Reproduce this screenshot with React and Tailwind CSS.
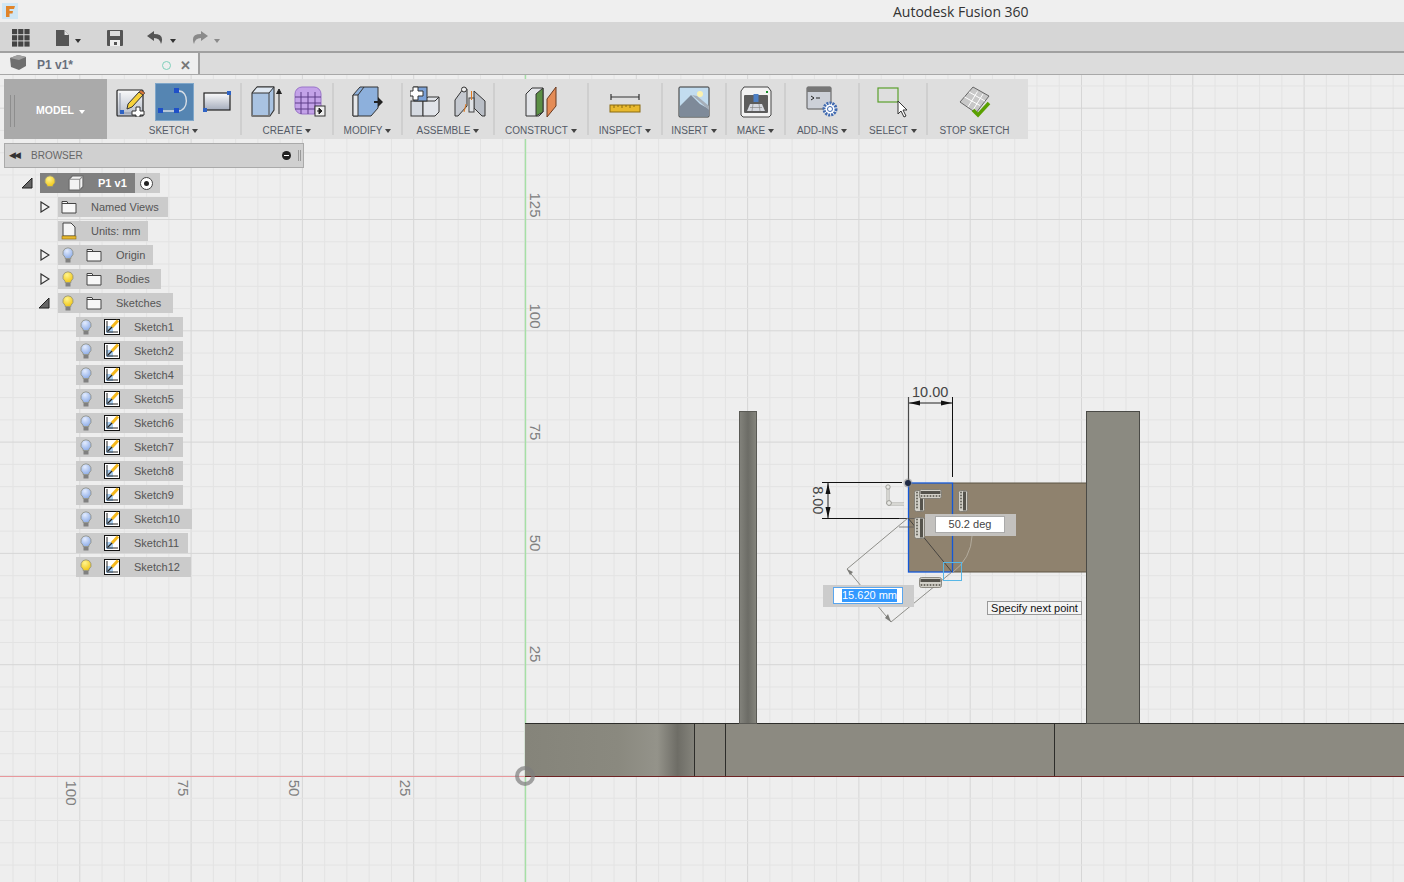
const minorX = Array.from({ length: 64 }, (_, i) => i);
const OX = 525;
const OY = 776;
const STEP = 22.26;

const Caret = ({ className = 'border-t-[#444]' }) => (
  <span className={`inline-block w-0 h-0 border-x-[3px] border-x-transparent border-t-[4px] ${className}`} />
);

const IconSketchNew = () => (
  <svg width="30" height="30" viewBox="0 0 30 30">
    <defs>
      <linearGradient id="pg" x1="0" y1="0" x2="0" y2="1"><stop offset="0" stopColor="#fafafa" /><stop offset="1" stopColor="#b3bac8" /></linearGradient>
    </defs>
    <rect x="1" y="3" width="26" height="26" rx="1" fill="url(#pg)" stroke="#222" strokeWidth="1.2" />
    <path d="M4 6 V26 H24" fill="none" stroke="#8b93a3" strokeWidth="1" />
    <rect x="4" y="23" width="4" height="4" fill="#2f63c4" />
    <path d="M12 17 L23 5 L27 8 L16 20 L11 22 Z" fill="#f7d23c" stroke="#333" strokeWidth="1" />
    <path d="M23 5 L25 3 L29 6 L27 8 Z" fill="#d9783a" stroke="#333" strokeWidth="0.6" />
    <path d="M20 20h4v4h4v4h-4v2h-4v-2h-4v-4h4z" fill="#fff" stroke="#333" strokeWidth="1" />
  </svg>
);

const IconSlot = () => (
  <svg width="36" height="34" viewBox="0 0 36 34">
    <path d="M6 26 H21 C32 26 32 6 22 6" fill="none" stroke="#d7dde4" strokeWidth="1.4" />
    <rect x="1" y="23" width="5" height="5" fill="#1f50c8" />
    <rect x="17" y="23" width="5" height="5" fill="#1f50c8" />
    <rect x="17" y="3" width="5" height="5" fill="#1f50c8" />
  </svg>
);

const IconRect = () => (
  <svg width="30" height="26" viewBox="0 0 30 26">
    <defs>
      <linearGradient id="rg" x1="0" y1="0" x2="0" y2="1"><stop offset="0" stopColor="#fbfbfb" /><stop offset="1" stopColor="#a4acbc" /></linearGradient>
    </defs>
    <rect x="2" y="4" width="26" height="17" fill="url(#rg)" stroke="#222" strokeWidth="1.2" />
    <rect x="25" y="2" width="4" height="4" fill="#2f63c4" />
    <rect x="1" y="19" width="4" height="4" fill="#2f63c4" />
  </svg>
);

const IconBox = () => (
  <svg width="32" height="32" viewBox="0 0 32 32">
    <path d="M1 7 L6 1 H23 V24 L19 30 H1 Z" fill="#a9c3e2" stroke="#333" strokeWidth="1.1" />
    <path d="M1 7 H18 L23 1 H6 Z" fill="#dfe8f2" stroke="#333" strokeWidth="1" />
    <path d="M18 7 V30" stroke="#444" strokeWidth="1" />
    <path d="M1 30 H19" stroke="#777" strokeWidth="2" />
    <path d="M28 28 V5 M25.5 8 L28 3 L30.5 8" fill="#222" stroke="#222" strokeWidth="1" />
  </svg>
);

const IconForm = () => (
  <svg width="32" height="32" viewBox="0 0 32 32">
    <rect x="1" y="1" width="26" height="27" rx="7" fill="#c3a2e8" stroke="#9a74c9" strokeWidth="1" />
    <path d="M7 6 V28 M14 6 V28 M21 6 V28 M1 11 H27 M1 17 H27 M1 23 H27" stroke="#5d3d87" strokeWidth="1" />
    <rect x="21" y="20" width="10" height="10" fill="#eee" stroke="#333" />
    <path d="M23 25 H27 M25 22 L28 25 L25 28 Z" fill="#222" stroke="#222" />
  </svg>
);

const IconModify = () => (
  <svg width="32" height="32" viewBox="0 0 32 32">
    <path d="M1 9 L8 1 H26 V22 L19 30 H1 Z" fill="#8db0dc" stroke="#333" strokeWidth="1" />
    <path d="M1 9 H6 V30 H1 Z" fill="#e5e7ea" stroke="#333" strokeWidth="1" />
    <path d="M6 9 L12 1" stroke="#333" />
    <path d="M22 15 H26 V11 L31 16 L26 21 V17 H22 Z" fill="#222" />
  </svg>
);

const IconAssemble = () => (
  <svg width="32" height="32" viewBox="0 0 32 32">
    <rect x="1" y="15" width="12" height="15" fill="#d5dae1" stroke="#333" />
    <path d="M13 15 L18 11 H29 V26 L25 30 H13 Z" fill="#e1e4e9" stroke="#333" />
    <path d="M13 15 H25 L29 11" fill="none" stroke="#333" />
    <rect x="4" y="1" width="13" height="14" fill="#7ca2d8" stroke="#333" />
    <path d="M3 0h5v4h5v5h-5v4h-5v-4h-3v-5h3z" fill="#fff" stroke="#333" transform="translate(0 1)" />
  </svg>
);

const IconJoint = () => (
  <svg width="32" height="32" viewBox="0 0 32 32">
    <path d="M1 14 L9 3 H13 V20 L4 30 H1 Z" fill="#c5c9d0" stroke="#333" />
    <circle cx="10" cy="3.5" r="2.5" fill="#eee" stroke="#333" />
    <path d="M20 5 L31 15 V30 L28 30 L20 22 Z" fill="#b9bec6" stroke="#333" />
    <rect x="15" y="12" width="5" height="14" fill="#dfe2e6" stroke="#444" />
    <path d="M17.5 5 V14 M10 26 L12 18" stroke="#e07a20" strokeWidth="1" />
  </svg>
);

const IconConstruct = () => (
  <svg width="32" height="32" viewBox="0 0 32 32">
    <path d="M1 8 L7 2 H18 V26 L14 30 H1 Z" fill="#e2e4e8" stroke="#333" />
    <path d="M11 8 L18 2 V26 L11 30 Z" fill="#5a8f45" stroke="#333" />
    <path d="M22 13 L31 1 V20 L22 31 Z" fill="#e48c56" stroke="#6a3a20" />
  </svg>
);

const IconRuler = () => (
  <svg width="32" height="32" viewBox="0 0 32 32">
    <path d="M2 8 V14 M2 11 H30 M30 8 V14" stroke="#333" strokeWidth="1.2" fill="none" />
    <rect x="1" y="19" width="30" height="7" fill="#e8b92e" stroke="#8a6a10" />
    <path d="M5 19v3M9 19v2M13 19v3M17 19v2M21 19v3M25 19v2" stroke="#8a6a10" />
  </svg>
);

const IconInsert = () => (
  <svg width="32" height="32" viewBox="0 0 32 32">
    <rect x="1" y="1" width="30" height="30" rx="1" fill="#c2dcef" stroke="#333" />
    <circle cx="22" cy="8" r="3" fill="#fbf2b0" />
    <path d="M2 30 V20 L13 9 L22 18 L31 23 V30 Z" fill="#7e8a99" />
    <path d="M14 9 L31 24 V20 L19 10 Z" fill="#a5aeb8" />
  </svg>
);

const IconMake = () => (
  <svg width="32" height="32" viewBox="0 0 32 32">
    <path d="M4 1 H28 L31 5 V29 L29 31 H3 L1 29 V5 Z" fill="#f2f2f2" stroke="#444" />
    <rect x="4" y="9" width="24" height="18" rx="1" fill="#5c5c5c" />
    <path d="M7 25 L10 18 H22 L25 25 Z" fill="#d6d9e0" />
    <path d="M10 21.5 H22 M13 18 L12 25 M19 18 L20 25" stroke="#888" strokeWidth="0.7" />
    <rect x="13.5" y="8" width="5" height="8" fill="#4d7fc4" />
    <rect x="26" y="5" width="2" height="2" fill="#1a8f2b" />
  </svg>
);

const IconAddins = () => (
  <svg width="32" height="32" viewBox="0 0 32 32">
    <rect x="1" y="1" width="24" height="22" rx="1" fill="#ccd0d8" stroke="#555" />
    <rect x="1" y="1" width="24" height="5" fill="#777" />
    <path d="M5 10 L8 12 L5 14 M10 12 H14" stroke="#222" fill="none" />
    <circle cx="24" cy="23" r="6" fill="#fff" stroke="#3f69b0" strokeWidth="3" strokeDasharray="2 1" />
    <circle cx="24" cy="23" r="2.5" fill="#fff" stroke="#3f69b0" />
  </svg>
);

const IconSelect = () => (
  <svg width="32" height="32" viewBox="0 0 32 32">
    <rect x="1" y="2" width="20" height="14" fill="none" stroke="#5aa02c" strokeWidth="1.2" />
    <path d="M21 15 V28 L24 25 L27 31 L29 30 L26 24 L30 24 Z" fill="#fff" stroke="#333" />
  </svg>
);

const IconStop = () => (
  <svg width="32" height="32" viewBox="0 0 32 32">
    <path d="M1 16 L14 1 L30 10 L17 27 Z" fill="#c8c8c8" stroke="#666" />
    <path d="M5.5 11 L21 19.5 M10 6 L26 15 M9 21 L18.5 5.5 M14 24 L24 8" stroke="#fff" strokeWidth="1" />
    <path d="M14 24 L19 29 L30 17" fill="none" stroke="#5aa000" strokeWidth="3.5" />
  </svg>
);

const Bulb = ({ on }) => (
  <svg width="12" height="16" viewBox="0 0 12 16">
    <defs>
      <radialGradient id="bulbOn" cx="0.4" cy="0.3" r="0.75"><stop offset="0" stopColor="#fff48e" /><stop offset="1" stopColor="#f0c410" /></radialGradient>
      <radialGradient id="bulbOff" cx="0.4" cy="0.3" r="0.75"><stop offset="0" stopColor="#e3ecff" /><stop offset="1" stopColor="#8aaae6" /></radialGradient>
    </defs>
    <path d="M6 0.8 A5.2 5.2 0 0 1 9 10.2 V11.5 H3 V10.2 A5.2 5.2 0 0 1 6 0.8 Z" fill={on ? 'url(#bulbOn)' : 'url(#bulbOff)'} stroke="#8f8f80" strokeWidth="0.8" />
    <rect x="3.5" y="12" width="5" height="3.5" fill="#808080" />
  </svg>
);

const Folder = () => (
  <svg width="16" height="14" viewBox="0 0 16 14">
    <path d="M1 1.5 H6 L7 3.5 H15 V13 H1 Z" fill="#f7f7f7" stroke="#444" />
    <path d="M1 3.5 H7" stroke="#444" />
  </svg>
);

const UnitsDoc = () => (
  <svg width="16" height="18" viewBox="0 0 16 18">
    <path d="M2 1 H10 L14 5 V14 H2 Z" fill="#f5f5f5" stroke="#444" />
    <rect x="1" y="14" width="14" height="3" fill="#e8b92e" stroke="#8a6a10" strokeWidth="0.6" />
  </svg>
);

const SketchIcon = () => (
  <svg width="17" height="16" viewBox="0 0 17 16">
    <rect x="0.5" y="0.5" width="15" height="15" fill="#fff" stroke="#111" />
    <rect x="2" y="7" width="7" height="7" fill="#a8cdf0" />
    <path d="M3 2 V13 H14" fill="none" stroke="#222" strokeWidth="1" />
    <path d="M4 12 L10 6" stroke="#222" strokeWidth="1.2" />
    <path d="M8 8 L14 1.5" stroke="#f5b81c" strokeWidth="3" />
  </svg>
);

const TriOpen = () => (
  <svg width="12" height="12" viewBox="0 0 12 12"><path d="M1 11 H11 V1 Z" fill="#666" stroke="#222" /></svg>
);
const TriClosed = () => (
  <svg width="10" height="12" viewBox="0 0 10 12"><path d="M1 1 L9 6 L1 11 Z" fill="#f3f3f3" stroke="#333" strokeWidth="1.2" /></svg>
);

// constraint glyph: a light comb with a dark bar along one side
const Hatch = ({ x, y, w, h, vertical }) => {
  const len = vertical ? h : w;
  const n = Math.floor((len - 2) / 3);
  return (
    <g>
      <rect x={x + 0.5} y={y + 0.5} width={w - 1} height={h - 1} rx="2" fill="#d2d0c8" stroke="#77756c" strokeWidth="0.8" />
      {vertical ? (
        <rect x={x + w - 5} y={y + 1.5} width="3" height={h - 3} fill="#55534c" />
      ) : (
        <rect x={x + 1.5} y={y + 2} width={w - 3} height="3" fill="#55534c" />
      )}
      {Array.from({ length: n }, (_, i) =>
        vertical ? (
          <circle key={i} cx={x + 3} cy={y + 2.5 + i * 3} r="1" fill="#66645c" />
        ) : (
          <circle key={i} cx={x + 2.5 + i * 3} cy={y + h - 3} r="1" fill="#66645c" />
        )
      )}
    </g>
  );
};

const Viewport = () => (
  <svg className="absolute inset-0 w-full h-full" viewBox="0 75 1404 807">
    <defs>
      <linearGradient id="base" x1="0" y1="0" x2="1" y2="0">
        <stop offset="0" stopColor="#85847a" />
        <stop offset="0.55" stopColor="#8a897f" />
        <stop offset="0.78" stopColor="#94938a" />
        <stop offset="0.9" stopColor="#6e6d66" />
        <stop offset="1" stopColor="#85847c" />
      </linearGradient>
      <linearGradient id="post" x1="0" y1="0" x2="1" y2="0">
        <stop offset="0" stopColor="#83837c" />
        <stop offset="0.5" stopColor="#6c6c66" />
        <stop offset="1" stopColor="#85857d" />
      </linearGradient>
    </defs>

    {minorX.map((i) => {
      const x = OX + (i - 24) * STEP;
      return <line key={`x${i}`} x1={x} x2={x} y1="75" y2="882" stroke={i % 5 === 4 ? '#d6d6d6' : '#e3e3e3'} strokeWidth="1" />;
    })}
    {minorX.slice(0, 40).map((i) => {
      const y = OY + (i - 31) * STEP;
      return <line key={`y${i}`} y1={y} y2={y} x1="0" x2="1404" stroke={(i - 31) % 5 === 0 ? '#d6d6d6' : '#e3e3e3'} strokeWidth="1" />;
    })}

    <line x1="0" x2="525" y1="776.5" y2="776.5" stroke="#e8989c" strokeWidth="1" />
    <line x1="525.5" x2="525.5" y1="75" y2="882" stroke="#a5e0a5" strokeWidth="1.4" />

    <rect x="525" y="723.5" width="169.5" height="53" fill="url(#base)" />
    <rect x="694.5" y="723.5" width="709.5" height="53" fill="#8c8a81" />
    <path d="M525 723.5 H1404 M694.5 723 V776 M725.5 723 V776 M1054.5 723 V776" stroke="#2d2d2a" strokeWidth="1" fill="none" />
    <line x1="525" x2="1404" y1="776.5" y2="776.5" stroke="#6e2424" strokeWidth="1" />

    <rect x="739.5" y="411.5" width="17" height="312" fill="url(#post)" stroke="#5a5a55" strokeWidth="1" />
    <rect x="1086.5" y="411.5" width="53" height="312" fill="#8b8a81" stroke="#4a4a46" strokeWidth="1" />

    <rect x="908" y="483" width="178" height="89" fill="#8f826e" />
    <path d="M953 483 H1086 M953 572 H1086" stroke="#5d5444" strokeWidth="1" />
    <rect x="908.5" y="483" width="44" height="89" fill="none" stroke="#1358d8" strokeWidth="1.3" />

    <path d="M908.5 397 V481" stroke="#4a4a4a" strokeWidth="1.2" />
    <path d="M952.5 397 V477" stroke="#111" strokeWidth="1" />
    <path d="M909 403 H952" stroke="#222" strokeWidth="1" />
    <path d="M909 403 L920 400.5 V405.5 Z M952 403 L941 400.5 V405.5 Z" fill="#111" />

    <path d="M822 482.5 H902 M822 518.5 H908" stroke="#111" strokeWidth="1" />
    <path d="M828 483 V518" stroke="#222" strokeWidth="1" />
    <path d="M828 483 L825.5 494 H830.5 Z M828 518 L825.5 507 H830.5 Z" fill="#111" />

    <path d="M908 518 L952 572" stroke="#333" strokeWidth="0.8" />
    <path d="M899 518.5 H925 M899 527 H925" stroke="#555" strokeWidth="0.7" />
    <path d="M908 518 L847 569 L891 622 L952 572" fill="none" stroke="#8f8f8a" strokeWidth="1" />
    <path d="M847 569 L853 572 L850 575 Z M891 622 L885 618 L888 614 Z" fill="#7c7c78" />
    <path d="M972 536 A46 46 0 0 1 953 572" fill="none" stroke="#bdb6aa" strokeWidth="0.8" />
    <rect x="943.5" y="562.5" width="18" height="18" fill="none" stroke="#58b7e6" strokeWidth="1" />

    <circle cx="908" cy="483" r="4.5" fill="#8a8a8a" fillOpacity="0.5" />
    <circle cx="908" cy="483" r="3" fill="#1f2a44" />

    <path d="M888 487 V504 M888 504 H904" fill="none" stroke="#a6a6a0" strokeWidth="3" />
    <path d="M888 487 V504 M888 504 H904" fill="none" stroke="#e8e8e4" strokeWidth="1.4" />
    <circle cx="888" cy="487" r="2.2" fill="#e8e8e4" stroke="#8a8a84" strokeWidth="0.8" />
    <circle cx="889" cy="503" r="2.4" fill="#e8e8e4" stroke="#8a8a84" strokeWidth="0.8" />

    <Hatch x={914} y={490} w={11} h={22} vertical />
    <Hatch x={919} y={489} w={23} h={10} />
    <Hatch x={958} y={490} w={10} h={22} vertical />
    <Hatch x={914} y={517} w={11} h={22} vertical />
    <Hatch x={919} y={577} w={23} h={11} />

    <circle cx="525" cy="776" r="8" fill="none" stroke="#7d7d7d" strokeOpacity="0.7" strokeWidth="4" />
  </svg>
);

const axisLabels = [
  { t: '125', x: 535, y: 205 },
  { t: '100', x: 535, y: 316 },
  { t: '75', x: 535, y: 432 },
  { t: '50', x: 535, y: 543 },
  { t: '25', x: 535, y: 654 },
  { t: '100', x: 71, y: 793 },
  { t: '75', x: 183, y: 788 },
  { t: '50', x: 294, y: 788 },
  { t: '25', x: 405, y: 788 },
];

const toolGroups = [
  { label: 'SKETCH', w: 'w-[135px]', pad: 'pl-[9px]', icons: [<IconSketchNew key="a" />, <span key="b" className="ml-[9px] mr-[8px] flex h-[38px] w-[39px] shrink-0 items-center justify-center border border-[#7fa6c9] bg-[#5585b2]"><IconSlot /></span>, <IconRect key="c" />] },
  { label: 'CREATE', w: 'w-[92px]', pad: 'pl-[9px] gap-[11px]', icons: [<IconBox key="a" />, <IconForm key="b" />] },
  { label: 'MODIFY', w: 'w-[69px]', pad: 'justify-center', icons: [<IconModify key="a" />] },
  { label: 'ASSEMBLE', w: 'w-[92px]', pad: 'justify-center gap-[12px]', icons: [<IconAssemble key="a" />, <IconJoint key="b" />] },
  { label: 'CONSTRUCT', w: 'w-[94px]', pad: 'justify-center', icons: [<IconConstruct key="a" />] },
  { label: 'INSPECT', w: 'w-[74px]', pad: 'justify-center', icons: [<IconRuler key="a" />] },
  { label: 'INSERT', w: 'w-[64px]', pad: 'justify-center', icons: [<IconInsert key="a" />] },
  { label: 'MAKE', w: 'w-[59px]', pad: 'justify-center', icons: [<IconMake key="a" />] },
  { label: 'ADD-INS', w: 'w-[74px]', pad: 'justify-center', icons: [<IconAddins key="a" />] },
  { label: 'SELECT', w: 'w-[68px]', pad: 'justify-center', icons: [<IconSelect key="a" />] },
  { label: 'STOP SKETCH', w: 'w-[93px]', pad: 'justify-center', icons: [<IconStop key="a" />], noCaret: true, last: true },
];

const Toolbar = () => (
  <div className="absolute left-[4px] top-[4px] flex h-[60px] w-[1024px] bg-[#dedede]">
    <div className="flex w-[103px] shrink-0 items-center bg-[#aaaaaa] pl-[6px] pt-[3px]">
      <span className="h-[32px] w-[5px] border-x border-[#8e8e8e]" />
      <span className="ml-[21px] text-[10.5px] font-bold text-white">MODEL</span>
      <span className="ml-[5px] mb-[4px]"><Caret className="border-t-white" /></span>
    </div>
    {toolGroups.map((g) => (
      <div key={g.label} className={`mt-[4px] flex h-[52px] shrink-0 flex-col ${g.w} ${g.last ? '' : 'border-r-2 border-[#cfcfcf]'}`}>
        <div className={`flex h-[38px] shrink-0 items-center ${g.pad}`}>{g.icons}</div>
        <div className="mt-[3px] flex h-[13px] shrink-0 items-center justify-center gap-[3px] whitespace-nowrap text-[10px] leading-none text-[#555a66]">
          {g.label}
          {!g.noCaret && <Caret />}
        </div>
      </div>
    ))}
  </div>
);

const TreeRow = ({ indent, arrow, bulb, icon, label, w }) => (
  <div className="flex h-[24px] items-center" style={{ paddingLeft: indent }}>
    <span className="flex w-[22px] justify-start pl-[4px]">{arrow}</span>
    <div className={`flex h-[20px] items-center whitespace-nowrap bg-[#cbcbcb] text-[11px] text-[#555] ${w}`}>
      {bulb ? (
        <span className="mr-[7px] flex w-[20px] justify-center">{bulb}</span>
      ) : (
        <span className="w-[2px]" />
      )}
      <span className="flex w-[18px] justify-center">{icon}</span>
      <span className="ml-[13px]">{label}</span>
    </div>
  </div>
);

const sketches = [
  { n: 'Sketch1', w: 'w-[107px]' },
  { n: 'Sketch2', w: 'w-[107px]' },
  { n: 'Sketch4', w: 'w-[107px]' },
  { n: 'Sketch5', w: 'w-[107px]' },
  { n: 'Sketch6', w: 'w-[107px]' },
  { n: 'Sketch7', w: 'w-[107px]' },
  { n: 'Sketch8', w: 'w-[107px]' },
  { n: 'Sketch9', w: 'w-[107px]' },
  { n: 'Sketch10', w: 'w-[116px]' },
  { n: 'Sketch11', w: 'w-[112px]' },
  { n: 'Sketch12', w: 'w-[115px]', on: true },
];

const Browser = () => (
  <div className="absolute left-[4px] top-[68px] w-[300px]">
    <div className="flex h-[25px] items-center border border-[#aaa] bg-[#d0d0d0] pl-[4px] pr-[2px] text-[10px] text-[#666]">
      <span className="text-[9px] tracking-[-2px] text-[#333]">◀◀</span>
      <span className="ml-[12px]">BROWSER</span>
      <span className="ml-auto flex h-[9px] w-[9px] items-center justify-center rounded-full bg-[#222]">
        <span className="h-[1.5px] w-[5px] bg-white" />
      </span>
      <span className="ml-[7px] h-[11px] w-[3px] border-x border-[#999]" />
    </div>
    <div className="-ml-[4px] pt-[3px]">
      <div className="flex h-[24px] items-center pl-[21px]">
        <span className="flex w-[19px] justify-start"><TriOpen /></span>
        <div className="flex h-[20px] w-[120px] items-center bg-[#cbcbcb]">
          <div className="flex h-[20px] w-[95px] items-center bg-[#808080]">
            <span className="flex w-[20px] justify-center"><Bulb on /></span>
            <span className="ml-[8px] flex w-[16px] justify-center">
              <svg width="16" height="16" viewBox="0 0 15 15"><path d="M1 4 L4 1 H14 V11 L11 14 H1 Z" fill="#f2f2f2" stroke="#666" /><path d="M1 4 H11 V14 M11 4 L14 1" fill="none" stroke="#888" /></svg>
            </span>
            <span className="ml-[14px] text-[11px] font-bold text-white">P1 v1</span>
          </div>
          <span className="ml-[5px] flex h-[13px] w-[13px] items-center justify-center rounded-full border border-[#444] bg-white">
            <span className="h-[5px] w-[5px] rounded-full bg-[#222]" />
          </span>
        </div>
      </div>
      <TreeRow indent={36} arrow={<TriClosed />} icon={<Folder />} label="Named Views" w="w-[110px]" />
      <TreeRow indent={36} icon={<UnitsDoc />} label="Units: mm" w="w-[90px]" />
      <TreeRow indent={36} arrow={<TriClosed />} icon={<Folder />} bulb={<Bulb />} label="Origin" w="w-[95px]" />
      <TreeRow indent={36} arrow={<TriClosed />} icon={<Folder />} bulb={<Bulb on />} label="Bodies" w="w-[103px]" />
      <TreeRow indent={36} arrow={<span className="-ml-[2px] flex"><TriOpen /></span>} icon={<Folder />} bulb={<Bulb on />} label="Sketches" w="w-[115px]" />
      {sketches.map((s) => (
        <TreeRow key={s.n} indent={54} icon={<SketchIcon />} bulb={<Bulb on={s.on} />} label={s.n} w={s.w} />
      ))}
    </div>
  </div>
);

export default function App() {
  return (
    <div className="flex h-[882px] w-[1404px] flex-col overflow-hidden bg-[#eeeeee] font-['Liberation_Sans',sans-serif]">
      <div className="relative flex h-[22px] shrink-0 items-center bg-[#efefef]">
        <svg className="ml-[2px]" width="16" height="16" viewBox="0 0 16 16">
          <rect width="16" height="16" fill="#cfe6f5" />
          <path d="M4 3 H13 L12 6 H7.5 V8 H11 L10.5 10.5 H7.5 V14 H4 Z" fill="#e0842a" />
        </svg>
        <span className="absolute left-[893px] top-[2px] font-['Open_Sans',sans-serif] text-[14px] leading-[19px] text-[#333]">Autodesk Fusion 360</span>
      </div>

      <div className="flex h-[31px] shrink-0 items-center border-b-2 border-[#a0a0a0] bg-[#d6d6d6] pt-[2px] text-[#555]">
        <svg className="ml-[12px]" width="18" height="18" viewBox="0 0 18 18" fill="#444">
          {[0, 6.2, 12.4].flatMap((y) => [0, 6.2, 12.4].map((x) => <rect key={`${x}-${y}`} x={x} y={y} width="5.2" height="5.2" />))}
        </svg>
        <svg className="ml-[26px]" width="13" height="16" viewBox="0 0 13 16"><path d="M0 0 H8 L13 5 V16 H0 Z" fill="#555" /><path d="M8.5 0.5 L13 5 H8.5 Z" fill="#e2e2e2" /></svg>
        <span className="ml-[6px]"><Caret className="border-t-[#333]" /></span>
        <svg className="ml-[26px]" width="16" height="16" viewBox="0 0 16 16"><path d="M0 1 Q0 0 1 0 H15 Q16 0 16 1 V15 Q16 16 15 16 H1 Q0 16 0 15 Z" fill="#555" /><rect x="3" y="1" width="10" height="5" fill="#ddd" /><rect x="3" y="10" width="10" height="6" fill="#eee" /><rect x="7" y="12" width="3" height="3" fill="#555" /></svg>
        <svg className="ml-[24px]" width="17" height="14" viewBox="0 0 17 14"><path d="M7 0 L0 5 L7 10 V7 Q13 7 14 13 Q18 3 7 3 Z" fill="#555" /></svg>
        <span className="ml-[6px]"><Caret className="border-t-[#333]" /></span>
        <svg className="ml-[15px]" width="17" height="14" viewBox="0 0 17 14"><path d="M10 0 L17 5 L10 10 V7 Q4 7 3 13 Q-1 3 10 3 Z" fill="#8a8a8a" /></svg>
        <span className="ml-[6px]"><Caret className="border-t-[#8a8a8a]" /></span>
      </div>

      <div className="flex h-[22px] shrink-0 border-b border-[#a8a8a8] bg-[#dcdcdc]">
        <div className="flex w-[200px] items-center border-r-2 border-[#a0a0a0] bg-[#eeeeee] pt-[3px]">
          <svg className="ml-[10px] -mt-[4px]" width="17" height="16" viewBox="0 0 17 16"><path d="M0 3 L8 0 L16 2 V11 L9 15 L1 12 Z" fill="#6f6f6f" /><path d="M0 3 L9 5 L16 2 L8 0 Z" fill="#a0a0a0" /></svg>
          <span className="ml-[10px] text-[12px] font-bold text-[#5a6270] opacity-90">P1 v1*</span>
          <span className="ml-auto mr-[-2px] h-[9px] w-[9px] rounded-full border border-[#7fd0bb]" />
          <span className="ml-[11px] mr-[7px] text-[13px] font-bold leading-none text-[#777]">✕</span>
        </div>
      </div>

      <div className="relative flex-1">
        <Viewport />
        {axisLabels.map((a) => (
          <span
            key={`${a.t}-${a.x}`}
            className="absolute rotate-90 text-[15px] leading-none text-[#808080] -translate-x-1/2 -translate-y-1/2"
            style={{ left: a.x, top: a.y - 75 }}
          >
            {a.t}
          </span>
        ))}
        <Toolbar />
        <Browser />

        <span className="absolute left-[912px] top-[310px] text-[14.5px] leading-none text-[#444]">10.00</span>
        <span className="absolute left-[804px] top-[418px] rotate-90 text-[14.5px] leading-none text-[#444]">8.00</span>

        <div className="absolute left-[925px] top-[439px] flex h-[22px] w-[91px] items-center bg-[#cccccc]/85 pl-[10px]">
          <div className="-mt-[1px] flex h-[17px] w-[70px] items-center justify-center border border-[#aaa] bg-white text-[11px] text-[#444]">50.2 deg</div>
        </div>
        <div className="absolute left-[823px] top-[510px] flex h-[22px] w-[91px] items-center bg-[#cccccc] pl-[10px]">
          <div className="-mt-[1px] flex h-[17px] w-[70px] items-center border border-[#5aa6ee] bg-white pl-[8px]">
            <span className="bg-[#3399ff] text-[11px] leading-[13px] text-white">15.620 mm</span>
          </div>
        </div>
        <div className="absolute left-[987px] top-[526px] flex h-[14px] w-[95px] items-center justify-center border border-[#999] bg-[#f4f4f4] text-[11px] text-[#111]">Specify next point</div>
      </div>
    </div>
  );
}
